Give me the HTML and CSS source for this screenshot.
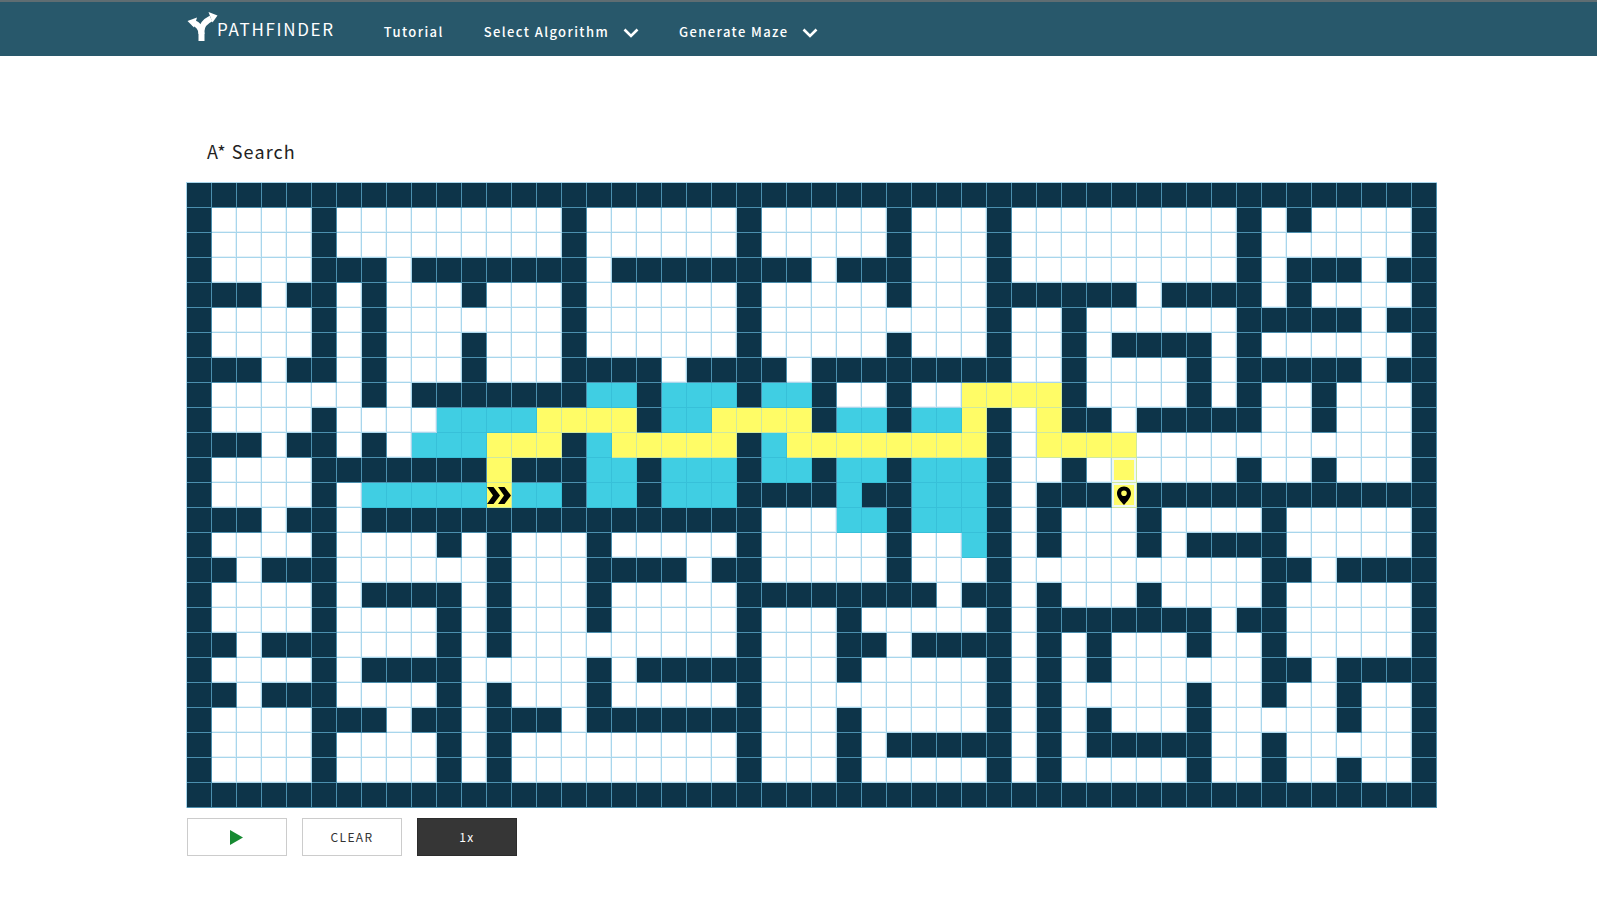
FILE: index.html
```html
<!DOCTYPE html>
<html lang="en">
<head>
<meta charset="utf-8">
<title>Pathfinder</title>
<link rel="stylesheet" href="styles.css">
</head>
<body>
<nav class="nav">
  <a class="brand">
    <svg class="logo" viewBox="0 0 31 30" aria-hidden="true">
      <path class="logo-line" d="M14.5 30V20C14.5 14 18 10.500 24 7.500"/>
      <path class="logo-line" d="M14.500 23C14.500 17 11 13.500 6 11.500"/>
      <path class="logo-head" d="M30.500 4.500L21.500 1L25.500 11.500Z"/>
      <path class="logo-head" d="M0.500 10L10 6.500L7 16.500Z"/>
    </svg>
    <span class="brand-name">PATHFINDER</span>
  </a>
  <a class="nav-link nav-tutorial">Tutorial</a>
  <a class="nav-link nav-algo">Select Algorithm
    <svg class="chev" viewBox="0 0 16 10" aria-hidden="true"><path d="M1.500 1.500L8 8L14.500 1.500"/></svg>
  </a>
  <a class="nav-link nav-maze">Generate Maze
    <svg class="chev" viewBox="0 0 16 10" aria-hidden="true"><path d="M1.500 1.500L8 8L14.500 1.500"/></svg>
  </a>
</nav>
<main class="main">
  <h1 class="title">A* Search</h1>
  <div class="grid" id="grid"></div>
  <div class="controls">
    <button class="btn" type="button" aria-label="Play">
      <svg class="play" viewBox="0 0 14 16" aria-hidden="true"><path d="M0 0L14 8L0 16Z"/></svg>
    </button>
    <button class="btn" type="button"><span class="btn-label">CLEAR</span></button>
    <button class="btn btn-dark" type="button"><span class="btn-label">1x</span></button>
  </div>
</main>
<script src="grid.js"></script>
</body>
</html>
```
FILE: styles.css
```css
* { box-sizing: border-box; }
html, body { margin: 0; padding: 0; background: #fff; }
body { font-family: "Noto Sans CJK JP", "Source Sans Pro", "Noto Sans", sans-serif; color: #222; }

.nav {
  display: flex;
  align-items: flex-start;
  height: 56px;
  padding-left: 187px;
  background: #28586b;
  border-top: 2px solid #5f6d72;
  color: #fff;
}
.brand { display: flex; align-items: flex-start; margin-top: 9px; }
.logo { width: 31px; height: 30px; display: block; }
.logo-line { fill: none; stroke: #fff; stroke-width: 6; }
.logo-head { fill: #fff; }
.brand-name {
  margin: 6px 0 0 -1px;
  font-size: 17px;
  line-height: 24px;
  letter-spacing: 1.7px;
}
.nav-link {
  display: flex;
  align-items: center;
  margin-top: 20px;
  font-size: 13px;
  line-height: 20px;
  letter-spacing: 1.4px;
  font-weight: 500;
}
.nav-tutorial { margin-left: 49px; }
.nav-algo { margin-left: 40px; }
.nav-maze { margin-left: 40px; }
.chev { width: 16px; height: 10px; margin-left: 14px; margin-top: 2px; }
.chev path { fill: none; stroke: #fff; stroke-width: 2.6; }

.main { padding-left: 186px; }
.title {
  margin: 0;
  padding: 82px 0 0 21px;
  height: 126px;
  font-size: 18px;
  line-height: 26px;
  font-weight: 400;
  letter-spacing: 1.1px;
  color: #222;
}
.grid {
  display: grid;
  grid-template-columns: repeat(50, 25px);
  grid-auto-rows: 25px;
  width: 1251px;
  border-left: 1px solid #a8d6ec;
  border-top: 1px solid #a8d6ec;
}
.cell {
  border-right: 1px solid #a8d6ec;
  border-bottom: 1px solid #a8d6ec;
  background: #fff;
  box-shadow: inset -1px -1px 0 #e4f2f9;
}
.wall { background: #0d3449; border-color: #4b8fae; box-shadow: none; }
.seen { background: #40cee3; border-color: #37c0d9; box-shadow: none; }
.path { background: #fffc66; border-color: #cfe9a0; box-shadow: none; }
.ring { box-shadow: inset 0 0 0 2px #eef8f2; }
.icon { display: block; width: 24px; height: 24px; }

.controls { display: flex; gap: 15px; margin: 10px 0 0 1px; }
.btn {
  width: 100px;
  height: 38px;
  display: flex;
  align-items: center;
  justify-content: center;
  padding: 0;
  background: #fff;
  border: 1px solid #ccc;
  font-family: inherit;
  font-size: 12px;
  letter-spacing: 1.4px;
  color: #333;
}
.btn-label { display: block; line-height: 16px; margin-bottom: 1px; }
.btn-dark { background: #363636; border-color: #2c2c2c; color: #fff; }
.play { width: 13px; height: 15px; display: block; margin-right: 2px; }
.play path { fill: #178a32; }
```
FILE: grid.js
```js
// Each row lists the columns of walls (w), visited cells (c) and path cells (y).
var ROWS = [
  { w: "0-49" },
  { w: "0,5,15,22,28,32,42,44,49" },
  { w: "0,5,15,22,28,32,42,49" },
  { w: "0,5,6,7,9-15,17-24,26,27,28,32,42,44,45,46,48,49" },
  { w: "0,1,2,4,5,7,11,15,22,28,32-37,39-42,44,49" },
  { w: "0,5,7,15,22,32,35,42-46,48,49" },
  { w: "0,5,7,11,15,22,28,32,35,37-40,42,49" },
  { w: "0,1,2,4,5,7,11,15-18,20-23,25-32,35,40,42-46,48,49" },
  { w: "0,7,9-15,18,22,25,28,35,40,42,45,49", c: "16,17,19,20,21,23,24", y: "31-34" },
  { w: "0,5,18,25,28,32,35,36,38-42,45,49", c: "10-13,19,20,26,27,29,30", y: "14-17,21-24,31,34" },
  { w: "0,1,2,4,5,7,15,22,32,49", c: "9,10,11,16,23", y: "12,13,14,17-21,24-31,34-37" },
  { w: "0,5-11,13,14,15,18,22,25,28,32,35,42,45,49", c: "16,17,19,20,21,23,24,26,27,29,30,31", y: "12,37" },
  { w: "0,5,15,18,22-25,27,28,32,34,35,36,38-49", c: "7-11,13,14,16,17,19,20,21,26,29,30,31", y: "12,37" },
  { w: "0,1,2,4,5,7-22,28,32,34,38,43,49", c: "26,27,29,30,31" },
  { w: "0,5,10,12,16,22,28,32,34,38,40-43,49", c: "31" },
  { w: "0,1,3,4,5,12,16-19,21,22,28,32,43,44,46-49" },
  { w: "0,5,7-10,12,16,22-29,31,32,34,38,43,49" },
  { w: "0,5,10,12,16,22,26,32,34-40,42,43,49" },
  { w: "0,1,3,4,5,10,12,22,26,27,29-32,34,36,40,43,49" },
  { w: "0,5,7-10,16,18-22,26,32,34,36,43,44,46-49" },
  { w: "0,1,3,4,5,10,12,16,22,32,34,40,43,46,49" },
  { w: "0,5,6,7,9,10,12,13,14,16-22,26,32,34,36,40,46,49" },
  { w: "0,5,10,12,22,26,28-32,34,36-40,43,49" },
  { w: "0,5,10,12,22,26,32,34,40,43,46,49" },
  { w: "0-49" }
];

var START_ICON = '<svg class="icon" viewBox="0 0 24 24"><path fill="#000" d="M0 4H6.500L13 12.500L6.500 21H0L6 12.500ZM11 4H17.500L24 12.500L17.500 21H11L17 12.500Z"/></svg>';
var TARGET_ICON = '<svg class="icon" viewBox="0 0 24 24"><path fill="#000" fill-rule="evenodd" d="M12 3.500C7.800 3.500 5 6.500 5 10.500C5 14.500 9 18.500 12 22C15 18.500 19 14.500 19 10.500C19 6.500 16.200 3.500 12 3.500ZM12 7.500A2.800 2.800 0 1 1 12 13.100A2.800 2.800 0 1 1 12 7.500Z"/></svg>';

function parse(spec) {
  var set = {};
  (spec || "").split(",").forEach(function (part) {
    if (!part) return;
    var ends = part.split("-").map(Number);
    for (var i = ends[0]; i <= ends[ends.length - 1]; i++) set[i] = true;
  });
  return set;
}

var grid = document.getElementById("grid");
ROWS.forEach(function (row, r) {
  var walls = parse(row.w), seen = parse(row.c), path = parse(row.y);
  for (var c = 0; c < 50; c++) {
    var cell = document.createElement("div");
    cell.className = "cell" + (walls[c] ? " wall" : "") + (seen[c] ? " seen" : "") + (path[c] ? " path" : "");
    if (r === 12 && c === 12) cell.innerHTML = START_ICON;
    if (c === 37 && (r === 11 || r === 12)) cell.className += " ring";
    if (r === 12 && c === 37) cell.innerHTML = TARGET_ICON;
    grid.appendChild(cell);
  }
});
```
